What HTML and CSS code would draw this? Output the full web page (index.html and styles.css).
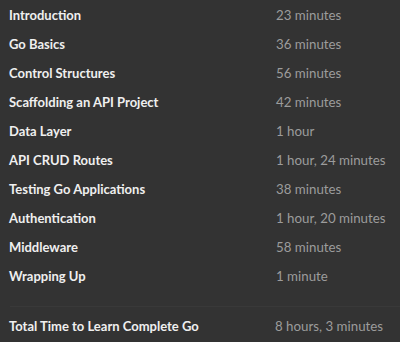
FILE: index.html
```html
<!DOCTYPE html>
<html>
<head>
<meta charset="utf-8">
<link rel="stylesheet" href="styles.css">
</head>
<body>
<div class="list">
  <div class="row"><span class="name">Introduction</span><span class="time">23 minutes</span></div>
  <div class="row"><span class="name">Go Basics</span><span class="time">36 minutes</span></div>
  <div class="row"><span class="name">Control Structures</span><span class="time">56 minutes</span></div>
  <div class="row"><span class="name">Scaffolding an API Project</span><span class="time">42 minutes</span></div>
  <div class="row"><span class="name">Data Layer</span><span class="time">1 hour</span></div>
  <div class="row"><span class="name">API CRUD Routes</span><span class="time">1 hour, 24 minutes</span></div>
  <div class="row"><span class="name">Testing Go Applications</span><span class="time">38 minutes</span></div>
  <div class="row"><span class="name">Authentication</span><span class="time">1 hour, 20 minutes</span></div>
  <div class="row"><span class="name">Middleware</span><span class="time">58 minutes</span></div>
  <div class="row"><span class="name">Wrapping Up</span><span class="time">1 minute</span></div>
</div>
<div class="total row"><span class="name">Total Time to Learn Complete Go</span><span class="time">8 hours, 3 minutes</span></div>
</body>
</html>
```
FILE: styles.css
```css
html, body {
  margin: 0;
  background: #333333;
  height: 100%;
}
body {
  font-family: Lato, "Liberation Sans", sans-serif;
  font-size: 13px;
}
.row {
  display: flex;
  height: 29px;
  align-items: center;
  padding-left: 9px;
}
.name {
  width: 267px;
  color: #efefef;
  font-weight: bold;
}
.time {
  color: #9c9c9c;
  font-size: 13.3px;
}
.total {
  margin-top: 16px;
  margin-left: 10px;
  padding-left: 0;
  padding-top: 4px;
  border-top: 1px solid #393939;
}
.total .name {
  width: 266px;
  margin-left: -1px;
}
```
